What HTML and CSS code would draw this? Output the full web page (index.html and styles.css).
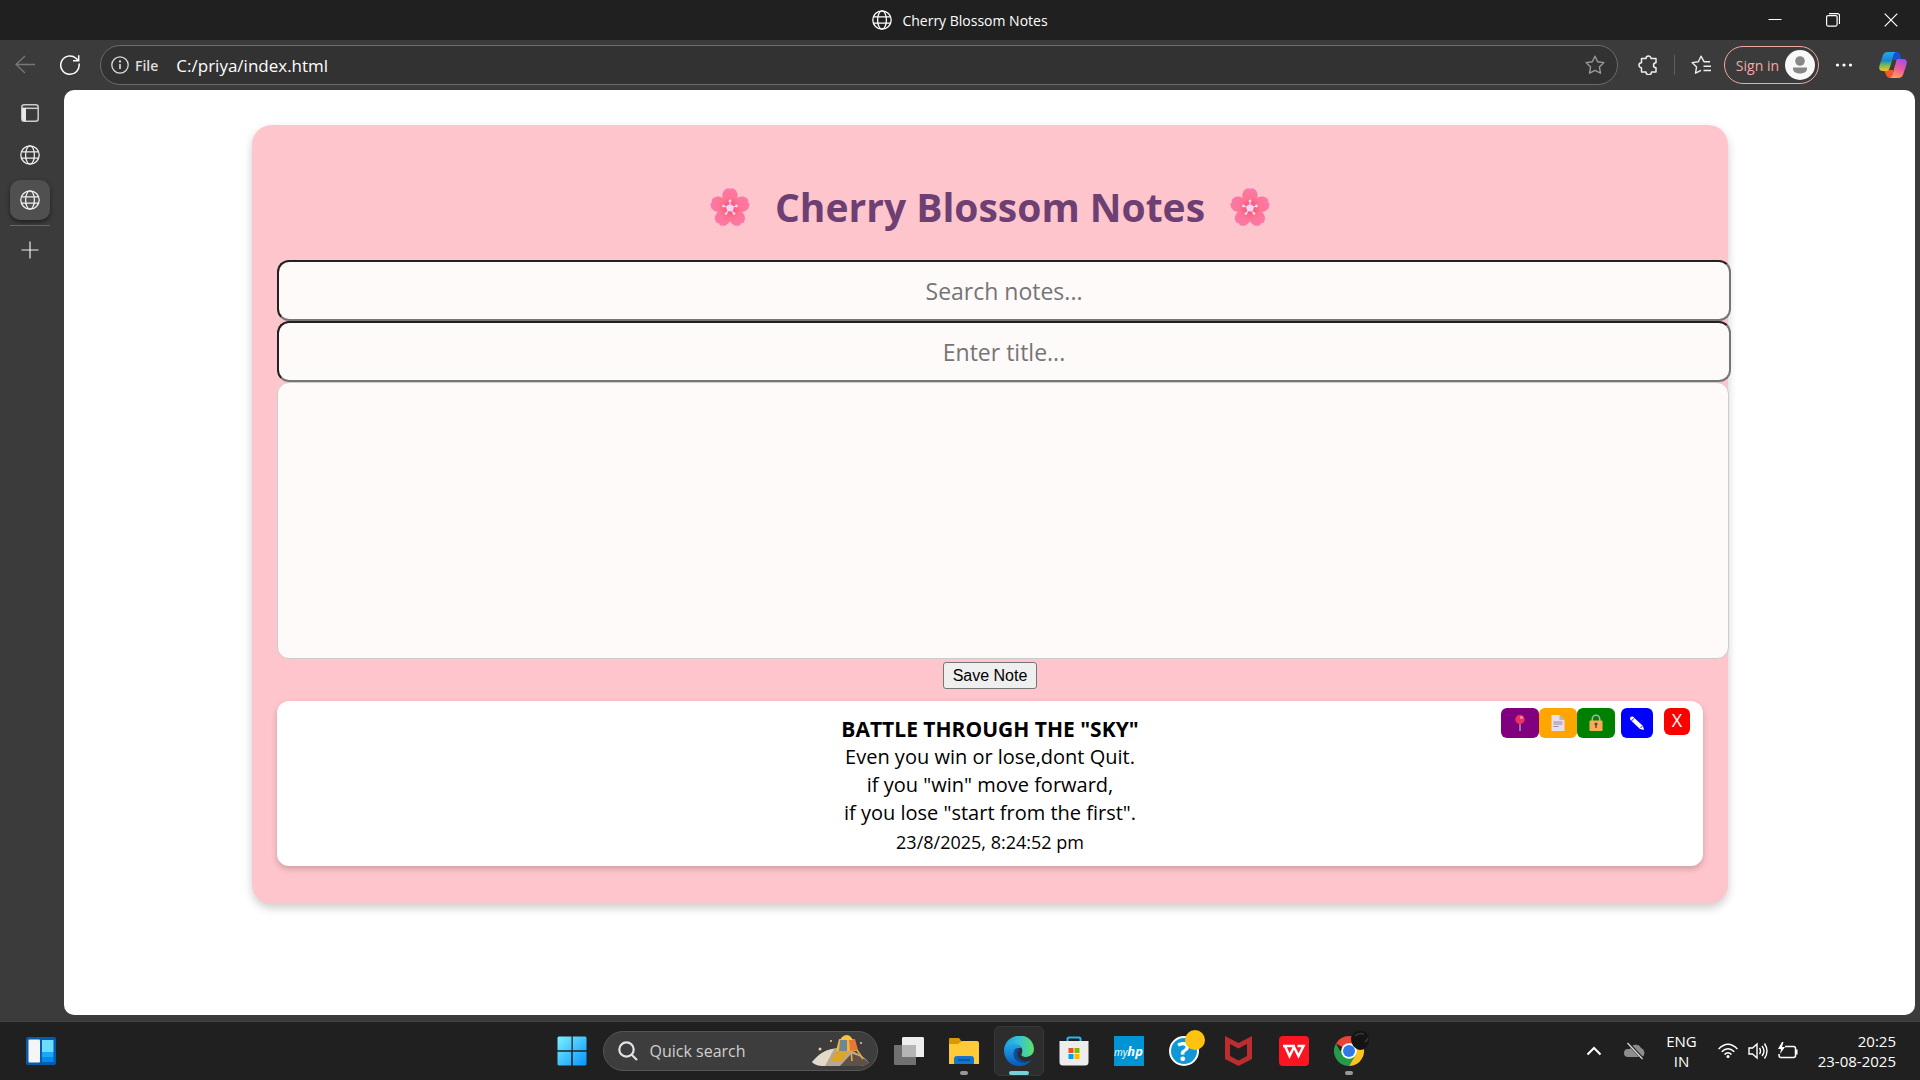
FILE: index.html
```html
<!DOCTYPE html>
<html lang="en">
<head>
<meta charset="utf-8">
<title>Cherry Blossom Notes</title>
<link rel="stylesheet" href="styles.css">
</head>
<body>
<svg width="0" height="0" class="defs" aria-hidden="true">
  <defs>
    <symbol id="globe" viewBox="0 0 20 20">
      <g fill="none" stroke="currentColor" stroke-width="1.3"><circle cx="10" cy="10" r="9.2"/><ellipse cx="10" cy="10" rx="4.4" ry="9.2"/><path d="M1.6 6.8h16.8M1.6 13.2h16.8"/></g>
    </symbol>
    <radialGradient id="petal" gradientUnits="userSpaceOnUse" cx="20" cy="21" r="21"><stop offset="0" stop-color="#fb4967"/><stop offset=".5" stop-color="#ff7594"/><stop offset="1" stop-color="#fc78b2"/></radialGradient>
    <symbol id="flower" viewBox="0 0 40 40">
      <g fill="url(#petal)">
        <path d="M20 23C13 17 9 6 16 2l2-1 2 1 2-1 2 1c7 4 3 15-4 21z"/>
        <path transform="rotate(72 20 21)" d="M20 23C13 17 9 6 16 2l2-1 2 1 2-1 2 1c7 4 3 15-4 21z"/>
        <path transform="rotate(144 20 21)" d="M20 23C13 17 9 6 16 2l2-1 2 1 2-1 2 1c7 4 3 15-4 21z"/>
        <path transform="rotate(216 20 21)" d="M20 23C13 17 9 6 16 2l2-1 2 1 2-1 2 1c7 4 3 15-4 21z"/>
        <path transform="rotate(288 20 21)" d="M20 23C13 17 9 6 16 2l2-1 2 1 2-1 2 1c7 4 3 15-4 21z"/>
      </g>
      <g stroke="#f3d4fb" stroke-width="1.2" fill="#f3d4fb"><path d="M20 21V14M20 21l6.500-2M20 21l4 5.600M20 21l-4 5.600M20 21l-6.500-2"/><circle cx="20" cy="21" r="3"/><circle cx="20" cy="14" r=".8"/><circle cx="26.500" cy="19" r=".8"/><circle cx="24" cy="26.600" r=".8"/><circle cx="16" cy="26.600" r=".8"/><circle cx="13.500" cy="19" r=".8"/></g>
    </symbol>
  </defs>
</svg>
<div class="window">
  <header class="titlebar">
    <span></span>
    <div class="title"><svg width="20" height="20"><use href="#globe"/></svg><span>Cherry Blossom Notes</span></div>
    <div class="controls">
      <button aria-label="Minimize"><svg width="14" height="14" viewBox="0 0 14 14"><path d="M.5 6.500h13" stroke="#fff"/></svg></button>
      <button aria-label="Restore"><svg width="14" height="14" viewBox="0 0 14 14" fill="none" stroke="#fff" stroke-width="1.200"><rect x=".6" y="2.600" width="10.500" height="10.500" rx="1.500"/><path d="M3 .6h8.500a2 2 0 0 1 2 2V11"/></svg></button>
      <button aria-label="Close"><svg width="14" height="14" viewBox="0 0 14 14"><path d="M.7.700l12.600 12.600M13.300.700.7 13.300" stroke="#fff" stroke-width="1.200"/></svg></button>
    </div>
  </header>

  <nav class="toolbar">
    <button class="back" aria-label="Back"><svg width="20" height="20" viewBox="0 0 20 20" fill="none" stroke="#777" stroke-width="1.300"><path d="M20 9.500H1M10 1 1 9.500 10 18"/></svg></button>
    <button aria-label="Refresh"><svg width="22" height="22" viewBox="0 0 22 22" fill="none" stroke="#fff" stroke-width="1.500"><path d="M20 9.500A9.200 9.200 0 1 1 17 4.200L19.500 6.600M19.700 1.200V6.700H14"/></svg></button>
    <div class="address">
      <svg width="18" height="18" viewBox="0 0 18 18" fill="none" stroke="#ddd" stroke-width="1.300"><circle cx="9" cy="9" r="8.200"/><path d="M9 8v5" stroke-width="1.600"/><circle cx="9" cy="5.500" r=".5"/></svg>
      <span class="scheme">File</span>
      <input class="url" aria-label="Address" value="C:/priya/index.html">
      <button aria-label="Favorite"><svg width="20" height="20" viewBox="0 0 20 20" fill="none" stroke="#999" stroke-width="1.400" stroke-linejoin="round"><path d="M10 1.200l2.700 5.500 6.200.9-4.500 4.300 1.100 6.300L10 15.300l-5.500 2.900 1.100-6.300L1.100 7.600l6.200-.9z"/></svg></button>
    </div>
    <div class="tools">
      <button aria-label="Extensions"><svg width="20" height="20" viewBox="0 0 20 20" fill="none" stroke="#eee" stroke-width="1.500" stroke-linejoin="round"><path d="M3.500 3.500H8a2.500 2.500 0 1 1 5 0h5v4.200a2.500 2.500 0 1 0 0 5V17h-4.500a2.500 2.500 0 1 1-5.500 0H3.500v-4.300a2.500 2.500 0 1 1 0-5z"/></svg></button>
      <span class="rule"></span>
      <button aria-label="Favorites"><svg width="20" height="20" viewBox="0 0 20 20" fill="none" stroke="#eee" stroke-width="1.400" stroke-linejoin="round"><path d="M19 6.700h-6L10 1.200 7.300 6.700l-6.200.9 4.500 4.300-1.100 6.300L10 15.300M12.500 11.300H20M12.500 15.500H20"/></svg></button>
      <button class="signin">Sign in<svg width="30" height="30" viewBox="0 0 30 30"><circle cx="15" cy="15" r="15" fill="#f8f8f8"/><circle cx="15" cy="11" r="4.800" fill="#878787"/><path d="M8 17.500h14v1.500c0 6-14 6-14 0z" fill="#878787"/></svg></button>
      <button aria-label="Menu"><svg width="18" height="6" viewBox="0 0 18 6" fill="#fff"><circle cx="2.500" cy="3" r="1.600"/><circle cx="9" cy="3" r="1.600"/><circle cx="15.500" cy="3" r="1.600"/></svg></button>
      <button class="copilot" aria-label="Copilot"><svg width="28" height="28" viewBox="0 0 28 28">
        <defs><linearGradient id="cpa" x1="0" y1="0" x2="0" y2="1"><stop offset="0" stop-color="#22a8f5"/><stop offset=".45" stop-color="#1988c8"/><stop offset=".7" stop-color="#76ba54"/><stop offset="1" stop-color="#f9c51b"/></linearGradient><linearGradient id="cpb" x1=".7" y1="0" x2=".3" y2="1"><stop offset="0" stop-color="#a74bf0"/><stop offset=".5" stop-color="#ee5b96"/><stop offset="1" stop-color="#ffa05c"/></linearGradient></defs>
        <path d="M12 1h6c3 0 3 3 4 6l1 2h-9z" fill="#1650d3"/><path d="M5 19h9l2 8h-5c-3 0-4-3-6-8z" fill="#f4592d"/>
        <path d="M9 1h8c-3 1-3 5-4 9l-2 6c-1 3-2 4-4 4H4c-5 0-4-4-3-7L4 4c1-2 2-3 5-3z" fill="url(#cpa)"/>
        <path d="M19 8h5c5 0 4 4 3 7l-3 9c-1 2-2 3-5 3h-8c3-1 3-5 4-9l2-7c0-2 1-3 2-3z" fill="url(#cpb)"/></svg></button>
    </div>
  </nav>

  <div class="body">
    <aside class="tabs">
      <button aria-label="Tab actions"><svg width="18" height="18" viewBox="0 0 18 18" fill="none" stroke="#ccc" stroke-width="1.500"><rect x=".8" y=".8" width="16.400" height="16.400" rx="2.500"/><path d="M1 4.300h16"/><path d="M1 4h4v13H3c-1 0-2-1-2-2z" fill="#e8e8e8" stroke="none"/></svg></button>
      <button aria-label="Tab"><svg width="20" height="20"><use href="#globe"/></svg></button>
      <button class="active" aria-label="Cherry Blossom Notes tab"><svg width="20" height="20"><use href="#globe"/></svg></button>
      <hr>
      <button aria-label="New tab"><svg width="18" height="18" viewBox="0 0 18 18"><path d="M9 .5v17M.5 9h17" stroke="#eee" stroke-width="1.200"/></svg></button>
    </aside>
    <main class="page">
      <section class="container">
        <h1><svg width="40" height="40"><use href="#flower"/></svg><span>Cherry Blossom Notes</span><svg width="40" height="40"><use href="#flower"/></svg></h1>
        <input class="field" type="text" placeholder="Search notes..." aria-label="Search notes">
        <input class="field" type="text" placeholder="Enter title..." aria-label="Title">
        <textarea class="editor" aria-label="Note"></textarea>
        <button class="save">Save Note</button>
        <article class="note">
          <strong>BATTLE THROUGH THE "SKY"</strong>
          <p>Even you win or lose,dont Quit.<br>if you "win" move forward,<br>if you lose "start from the first".</p>
          <small>23/8/2025, 8:24:52 pm</small>
          <div class="actions">
            <button class="pin" aria-label="Pin"><svg width="16" height="18" viewBox="0 0 16 18"><path d="M8 9v8" stroke="#aaa3b4" stroke-width="1.400"/><circle cx="8" cy="5.500" r="4.700" fill="#ec315e"/><circle cx="9.500" cy="3.500" r="1.600" fill="#ff91a5"/></svg></button>
            <button class="copy" aria-label="Copy"><svg width="16" height="18" viewBox="0 0 16 18"><path d="M1.500 1h8l5 5v11h-13z" fill="#e7dfee"/><path d="M9.500 1v5h5z" fill="#bcb0cb"/><path d="M3.500 8h9M3.500 10h9M3.500 12.500h5" stroke="#9989aa"/></svg></button>
            <button class="lock" aria-label="Lock"><svg width="16" height="18" viewBox="0 0 16 18"><path d="M4.300 8V5a3.700 3.700 0 0 1 7.400 0v3" fill="none" stroke="#b5a9bd" stroke-width="1.600"/><rect x="1.500" y="6.500" width="13" height="10.500" rx="1" fill="#f9ad51"/><circle cx="8" cy="10" r="1.600" fill="#5a4657"/><path d="M8 10v4" stroke="#5a4657" stroke-width="1.400"/></svg></button>
            <button class="edit" aria-label="Edit"><svg width="16" height="16" viewBox="0 0 16 16"><path d="M3.800 1.600 14 11l1 4-4-1L1.500 5z" fill="#fff"/><circle cx="3" cy="3.500" r="2" fill="#fff"/><path d="M2.500 6 5 3.200M11.500 13l2-2.200" stroke="#00f" stroke-width=".9"/></svg></button>
            <button class="remove">X</button>
          </div>
        </article>
      </section>
    </main>
  </div>
</div>

<footer class="taskbar">
  <div class="left"><button aria-label="Widgets"><svg width="30" height="28" viewBox="0 0 30 28"><rect width="30" height="28" rx="2" fill="#075bad"/><rect x="2.500" y="2.500" width="11.500" height="23" rx="1" fill="#f5f5f5"/><path d="M16 3h11.500v12H16z" fill="#69dcff"/><path d="M16 15h11.500v5H16z" fill="#18a9f5"/><path d="M16 20h11.500v5H16z" fill="#0788ed"/></svg></button></div>
  <div class="apps">
    <button aria-label="Start"><svg width="30" height="30" viewBox="0 0 30 30"><defs><linearGradient id="win" x1="0" y1="0" x2="1" y2="1"><stop offset="0" stop-color="#7bf2ff"/><stop offset="1" stop-color="#0793ff"/></linearGradient></defs><path fill="url(#win)" d="M1.500.5H15v14H.5v-13zM15.500.5h13l1 1v13h-14zM.5 15.500h14v14H1.500l-1-1zM15.500 15.500h14v13l-1 1h-13z"/><path d="M15 0v30M0 15h30" stroke="#202020"/></svg></button>
    <label class="search">
      <svg width="20" height="20" viewBox="0 0 20 20" fill="none" stroke="#e0e4e8" stroke-width="2.200"><circle cx="8.500" cy="8.500" r="7.200"/><path d="M13.500 13.500 19 19"/></svg>
      <input type="text" placeholder="Quick search">
      <svg width="60" height="34" viewBox="0 0 60 34">
        <path d="M1 28C8 20 18 13 30 14c12 1 24 9 28 15-4 3-8 3-12 3H14C8 32 4 31 1 28z" fill="#b4a79a"/><path d="M1 28c7-8 14-13 22-13l-9 17C8 32 4 31 1 28z" fill="#e3d9c9"/><path d="M40 20c9 1 15 6 18 9-3 3-8 3-12 3H29z" fill="#5f504b"/>
        <path d="M26 17 19 27l12 1 7-11z" fill="#dca52a"/><path d="M28 5h15l3 12H25z" fill="#eeb938"/><path d="M38 5h6l3 11-8 1z" fill="#e87736"/><path d="M29 6h7v11h-8z" fill="#6e8796"/><path d="M31 3q5-4 9 0l2 3H29z" fill="#f5c43b"/><path d="M40 17l1 10M46 16l6 9" stroke="#e3b23b" stroke-width="1.600"/><circle cx="9" cy="15" r="1.500" fill="#ead09e"/><circle cx="20" cy="7" r="1" fill="#ead09e"/><circle cx="50" cy="9" r="1" fill="#ead09e"/></svg>
    </label>
    <button aria-label="Task view"><svg width="30" height="28" viewBox="0 0 30 28"><path d="M9 0h20l1 1v19H8V1z" fill="#eee"/><path d="M0 8h22v20H1l-1-1z" fill="#808080" opacity=".85"/><path d="M8 8h14v12H8z" fill="#b5b5b5"/></svg></button>
    <button class="running" aria-label="File Explorer"><svg width="30" height="28" viewBox="0 0 30 28"><path d="M0 2Q0 1 1 1h9l3 4v4H0z" fill="#dc9705"/><path d="M0 7h9l4-3h15q2 0 2 2v21H0z" fill="#ffca37"/><path d="M5 27v-5q0-3 3-3h14q3 0 3 3v5z" fill="#1475cf"/><path d="M9 23h12" stroke="#07519d" stroke-width="1.500"/></svg></button>
    <button class="running current" aria-label="Edge"><svg width="30" height="30" viewBox="0 0 30 30"><defs><linearGradient id="ed" x1="0" y1=".4" x2="1" y2=".4"><stop offset="0" stop-color="#1b9de2"/><stop offset=".5" stop-color="#35c4d5"/><stop offset="1" stop-color="#5ee165"/></linearGradient><linearGradient id="eb" x1="0" y1="0" x2="0" y2="1"><stop offset="0" stop-color="#23a9e8"/><stop offset="1" stop-color="#0757ba"/></linearGradient></defs>
      <path d="M0 14C1-4 29-6 30 13c0 6-5 8-9 8-4-1-4-2-3-4 2-7-6-10-11-7-3 1-6 2-7 4z" fill="url(#ed)"/><path d="M0 14C2 8 14 5 18 12c-6-2-10 6-6 11 3 4 9 5 15 1-3 5-8 6-12 6C6 30 0 23 0 14z" fill="url(#eb)"/><path d="M11 13c-4 6 0 14 9 14 3 0 6-2 7-3-6 3-12 1-13-4-1-3 0-5 2-7-2-1-4-1-5 0z" fill="#0a4c97"/></svg></button>
    <button aria-label="Store"><svg width="30" height="30" viewBox="0 0 30 30"><path d="M8.500 6V3q0-1.500 1.500-1.500h10q1.500 0 1.500 1.500v3" fill="none" stroke="#2cb7ec" stroke-width="2"/><path d="M.5 5h29v21q0 3.500-3.500 3.500H4Q.5 29.500.5 26z" fill="#ededed"/><path d="M9.500 12h5v5h-5z" fill="#f05025"/><path d="M15.500 12h5v5h-5z" fill="#7eb900"/><path d="M9.500 18h5v5h-5z" fill="#00a3ee"/><path d="M15.500 18h5v5h-5z" fill="#ffb800"/></svg></button>
    <button class="hp" aria-label="myHP"><span>my<b>hp</b></span></button>
    <button class="help" aria-label="Help"><span>?</span><i></i></button>
    <button aria-label="McAfee"><svg width="27" height="30" viewBox="0 0 27 30"><path d="M0 0l13.500 7L27 0v23l-13.500 7L0 23zM5 8v12l8.500 4.500L22 20V8l-8.500 4.500z" fill="#bd2c2f" fill-rule="evenodd"/></svg></button>
    <button aria-label="WPS Office"><svg width="30" height="30" viewBox="0 0 30 30"><rect width="30" height="30" rx="4" fill="#fc1420"/><path d="M4 10h12M6 10l4.500 10 4.500-9 4.500 9 5-10h-6" fill="none" stroke="#fff" stroke-width="2.500"/></svg></button>
    <button class="running chrome" aria-label="Chrome"><svg width="36" height="36" viewBox="0 0 36 36"><path d="M15 21 2 13.500A15 15 0 0 1 28 13.500z" fill="#e94435"/><path d="M15 21H6.300L2 13.500A15 15 0 0 0 15 36l6-10z" fill="#249b49"/><path d="M15 21V13.500h13A15 15 0 0 1 15 36l6.500-11z" fill="#fcc31e"/><circle cx="15" cy="21" r="7.800" fill="#fff"/><circle cx="15" cy="21" r="6" fill="#3179e8"/><path d="M17 8c2-6 6-8 11-7 4 0 7 4 7 8 0 7-4 11-9 11-6-1-9-6-9-12z" fill="#141414"/><path d="M21 6c3-3 6-3 9-2M31 12q2-1 3-4" stroke="#3a3a3a" stroke-width="1.500" fill="none"/></svg></button>
  </div>
  <div class="tray">
    <svg width="16" height="10" viewBox="0 0 16 10"><path d="M1.500 8.500 8 2l6.500 6.500" fill="none" stroke="#fff" stroke-width="2"/></svg>
    <svg class="cloud" width="22" height="18" viewBox="0 0 22 18"><path d="M4 15a4 4 0 0 1 0-8h2a6 6 0 0 1 11-1 5 5 0 0 1 1 9z" fill="#8d8d8d"/><path d="M3 0l16 17" stroke="#202020" stroke-width="3"/><path d="M3.500 1l15 16" stroke="#ddd" stroke-width="1.200"/></svg>
    <span class="lang">ENG<br>IN</span>
    <svg width="20" height="16" viewBox="0 0 20 16" fill="none" stroke="#fff" stroke-width="1.500"><path d="M.6 6Q10-3.500 19.400 6M3.700 8.800q6.300-6 12.600 0M6.500 11.500q3.500-3.500 7 0"/><circle cx="10" cy="13.500" r="1.500" fill="#fff" stroke="none"/></svg>
    <svg width="20" height="18" viewBox="0 0 20 18" fill="none" stroke="#fff" stroke-width="1.400"><path d="M1 6h3.500L9 2v14l-4.500-4H1zM11.500 6q2 3 0 6M14 4q4 5 0 10M16.500 1.500q5 7.500 0 15"/></svg>
    <svg width="20" height="18" viewBox="0 0 20 18" fill="none" stroke="#fff" stroke-width="1.500"><path d="M7 4.500h8.500q2 0 2 2v7q0 2-2 2H3q-2 0-2-2V12M18.800 7.500v5"/><path d="M4 0 0 7h3l-1 5 5-7H4L5.500 0z" fill="#fff" stroke="none"/></svg>
    <span class="clock">20:25<br>23-08-2025</span>
  </div>
</footer>
</body>
</html>
```

FILE: styles.css
```css
* { box-sizing: border-box; }
body {
  margin: 0;
  min-height: 100vh;
  display: flex;
  flex-direction: column;
  background: #3b3b3b;
  color: #fff;
  font-family: "Segoe UI", "Open Sans", sans-serif;
}
svg { display: block; flex: none; }
.defs { position: absolute; }
button { font: inherit; color: inherit; background: none; border: 0; padding: 0; display: flex; align-items: center; justify-content: center; }
input { font: inherit; }

.window { flex: 1; display: flex; flex-direction: column; }

.titlebar { height: 40px; background: #202020; display: grid; grid-template-columns: 1fr auto 1fr; align-items: center; }
.title { display: flex; align-items: center; gap: 10px; font-size: 14px; }
.controls { display: flex; justify-content: flex-end; }
.controls button { width: 58px; height: 38px; }

.toolbar { height: 50px; display: flex; align-items: center; }
.toolbar > button { width: 40px; margin-right: 5px; }
.toolbar > .back { margin-left: 5px; }
.address { flex: 1; height: 40px; margin-left: 5px; padding: 0 12px 0 10px; border: 1px solid #6b6b6b; border-radius: 20px; background: #323232; display: flex; align-items: center; }
.scheme { margin: 0 18px 0 6px; font-size: 14px; font-weight: 600; color: #ddd; }
.url { flex: 1; border: 0; padding: 0; background: none; color: #fff; font-size: 17px; outline: none; }
.tools { display: flex; align-items: center; gap: 16px; margin-left: 20px; padding-right: 13px; }
.rule { width: 1px; height: 20px; background: #5f5f5f; }
.signin { height: 38px; gap: 6px; margin-left: -3px; padding: 0 3px 0 11px; border: 1px solid #f0a7a3; border-radius: 19px; color: #f5aaa8; font-size: 14px; }
.copilot { margin-left: 10px; }

.body { flex: 1; display: flex; padding: 0 5px 6px 0; }
.tabs { width: 64px; display: flex; flex-direction: column; align-items: center; padding: 3px 4px 0 0; color: #eee; }
.tabs button { width: 40px; height: 40px; margin-bottom: 2px; }
.tabs .active { margin: 3px 0 4px; border-radius: 10px; background: #505050; box-shadow: 0 2px 4px rgba(0, 0, 0, .5); }
.tabs hr { width: 40px; margin: 1px 0 4px; border: 0; border-top: 1px solid #666; }
.page { flex: 1; background: #fff; border-radius: 10px; padding: 35px 187px 35px 188px; color: #000; }

.container { padding: 25px; border-radius: 20px; background: #ffc5cc; box-shadow: 0 4px 10px rgba(0, 0, 0, .2); text-align: center; font-family: "Comic Sans MS", "Open Sans", sans-serif; }
h1 { display: flex; align-items: center; justify-content: center; gap: 25px; margin: 27px 0 23px; line-height: 60px; font-size: 39px; color: #6e3f72; }
.field, .editor { display: block; box-sizing: content-box; width: 100%; padding: 12px; border-radius: 12px; background: #fffafa; }
.field { height: 33px; border: 2px inset #767676; text-align: center; font-size: 23px; }
.field::placeholder { color: #757575; }
.editor { height: 251px; border: 1px solid #ccc; resize: none; }
.save { margin: 3px auto 12px; height: 27px; padding: 0 9px; border: 1px solid #767676; border-radius: 3px; background: #efefef; color: #000; font: 16px Arial, "Liberation Sans", sans-serif; }
.note { position: relative; margin-bottom: 13px; padding: 14px 10px 10px; border-radius: 12px; background: #fff; box-shadow: 0 3px 6px rgba(0, 0, 0, .2); font-size: 20px; line-height: 28px; }
.note p { margin: 0; }
.note strong, .note small { display: block; }
.note strong { font-size: 21px; }
.note small { font-size: 18px; padding-top: 1px; }
.actions { position: absolute; top: 7px; right: 13px; display: flex; align-items: flex-start; }
.actions button { width: 38px; height: 30px; border-radius: 6px; color: #fff; }
.pin { background: purple; }
.copy { background: orange; }
.lock { background: green; }
.actions .edit { width: 32px; margin: 0 11px 0 6px; background: blue; }
.actions .remove { width: 26px; height: 27px; padding-bottom: 3px; background: red; font: 18px "Open Sans", sans-serif; }

.taskbar { height: 59px; background: #202020; border-top: 1px solid #444; display: grid; grid-template-columns: 1fr auto 1fr; align-items: center; }
.left { padding-left: 26px; }
.apps { display: flex; align-items: center; gap: 5px; }
.apps > button { position: relative; width: 50px; height: 50px; border-radius: 6px; }
.search { width: 275px; height: 40px; margin: 0 1px; padding: 0 6px 0 14px; border: 1px solid #555; border-radius: 20px; background: #3d3d3d; display: flex; align-items: center; gap: 12px; }
.search input { flex: 1; min-width: 0; padding: 0; border: 0; background: none; color: #fff; font-size: 16px; }
.search input::placeholder { color: #d0d0d0; }
.running::after { content: ""; position: absolute; bottom: 1px; left: 21px; width: 8px; height: 4px; border-radius: 2px; background: #999; }
.apps > .current { background: #2d2d2d; border: 1px solid #383838; }
.current::after { bottom: 0; left: 14px; width: 20px; background: #76d2d8; }
.hp span { width: 30px; height: 30px; background: #0094d4; font: italic 10px/30px "Open Sans", sans-serif; }
.hp b { font-size: 13px; }
.help span { width: 30px; height: 30px; border: 2px solid #fff; border-radius: 50%; background: #1296d5; font: bold 26px/26px "Open Sans", sans-serif; }
.help i { position: absolute; top: 4px; right: 4px; width: 20px; height: 20px; border-radius: 50%; background: #ffc20e; }
.chrome svg { margin: -6px 0 0 6px; }
.tray { display: flex; align-items: center; justify-content: flex-end; gap: 10px; padding-right: 24px; font-size: 15px; line-height: 20px; }
.cloud { margin-left: 12px; }
.lang { margin: 0 11px 0 10px; text-align: center; }
.clock { margin-left: 10px; text-align: right; }
```
